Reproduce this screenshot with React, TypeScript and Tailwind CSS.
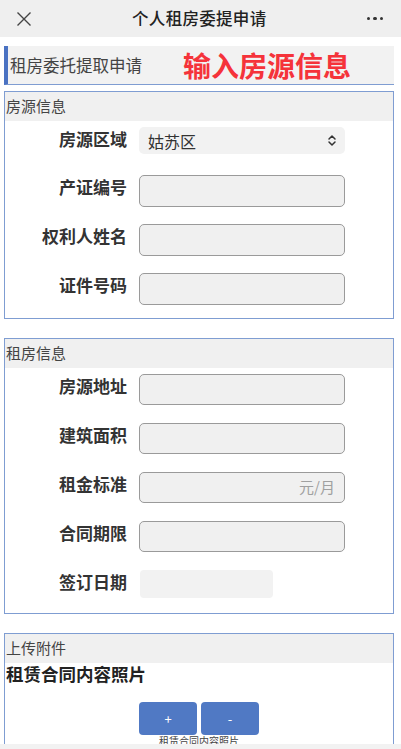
import { ReactNode } from 'react';

const font = { fontFamily: '"Noto Sans CJK SC", "Noto Sans", sans-serif' };

function Row(props: { label: string; children: ReactNode; className?: string }) {
	return (
		<div className={`flex items-start ${props.className ?? ''}`}>
			<div className="w-[122px] text-right text-[17px] leading-[24px] font-bold text-[#333]">{props.label}</div>
			<div className="ml-[12px]">{props.children}</div>
		</div>
	);
}

function TextBox(props: { suffix?: string; h?: string }) {
	return (
		<div className={`w-[206px] ${props.h ?? 'h-[32px]'} rounded-[5px] border border-[#9a9a9a] bg-[#f0f0f0] flex items-center justify-end pr-[9px]`}>
			{props.suffix ? <span className="text-[15px] text-[#a0a0a0]">{props.suffix}</span> : null}
		</div>
	);
}

function Section(props: { title: string; children: ReactNode; className?: string }) {
	return (
		<div className={`border border-[#7f9dd2] ${props.className ?? ''}`}>
			<div className="h-[29px] bg-[#f0f0f0] flex items-center pl-[1px] text-[15px] text-[#444]">{props.title}</div>
			{props.children}
		</div>
	);
}

function App() {
	return (
		<div style={font} className="w-[401px] min-h-[749px] bg-white relative overflow-hidden">
			{/* top bar */}
			<div className="h-[37px] bg-[#efefef] flex items-center justify-between px-[15px]">
				<svg width="16" height="16" viewBox="0 0 16 16" className="ml-[1px]">
					<path d="M1.5 1.5 L14.5 14.5 M14.5 1.5 L1.5 14.5" stroke="#444" strokeWidth="1.4" fill="none" />
				</svg>
				<div className="text-[16.5px] font-medium text-[#222] tracking-[0.3px]">个人租房委提申请</div>
				<div className="flex gap-[3px] mr-[3px]">
					<span className="w-[3.5px] h-[3.5px] rounded-full bg-[#333]"></span>
					<span className="w-[3.5px] h-[3.5px] rounded-full bg-[#333]"></span>
					<span className="w-[3.5px] h-[3.5px] rounded-full bg-[#333]"></span>
				</div>
			</div>

			<div className="pl-[4px] pr-[7px]">
				{/* title strip */}
				<div className="mt-[9px] h-[39px] bg-[#f2f2f2] border-l-[4px] border-l-[#4a72c2] border-b border-b-[#7f9dd2] flex items-center">
					<span className="ml-[2px] text-[16.5px] text-[#444]">租房委托提取申请</span>
					<span className="ml-[41px] text-[28px] font-bold text-[#f5333a] leading-none">输入房源信息</span>
				</div>

				<Section title="房源信息" className="mt-[6px] pb-[13px]">
					<Row label="房源区域" className="mt-[6px]">
						<div className="w-[206px] h-[27px] rounded-[5px] bg-[#f2f2f2] flex items-center justify-between pl-[9px] pr-[8px]">
							<span className="text-[16px] text-[#333]">姑苏区</span>
							<svg width="10" height="13" viewBox="0 0 10 13">
								<path d="M2 5 L5 2 L8 5 M2 8 L5 11 L8 8" stroke="#333" strokeWidth="1.5" fill="none" strokeLinecap="round" strokeLinejoin="round" />
							</svg>
						</div>
					</Row>
					<Row label="产证编号" className="mt-[21px]"><TextBox /></Row>
					<Row label="权利人姓名" className="mt-[17px]"><TextBox /></Row>
					<Row label="证件号码" className="mt-[17px]"><TextBox /></Row>
				</Section>

				<Section title="租房信息" className="mt-[19px] pb-[15px]">
					<Row label="房源地址" className="mt-[6px]"><TextBox h="h-[31px]" /></Row>
					<Row label="建筑面积" className="mt-[18px]"><TextBox h="h-[31px]" /></Row>
					<Row label="租金标准" className="mt-[18px]"><TextBox h="h-[31px]" suffix="元/月" /></Row>
					<Row label="合同期限" className="mt-[18px]"><TextBox h="h-[31px]" /></Row>
					<Row label="签订日期" className="mt-[18px]">
						<div className="ml-[1px] w-[133px] h-[28px] rounded-[4px] bg-[#f2f2f2]"></div>
					</Row>
				</Section>

				<Section title="上传附件" className="mt-[19px]">
					<div className="pl-[1px] mt-[-1px] text-[17.5px] leading-[24px] font-bold text-[#222]">租赁合同内容照片</div>
					<div className="flex justify-center gap-[4px] mt-[16px]">
						<button className="w-[58px] h-[33px] rounded-[4px] bg-[#5079c4] text-white text-[13px]">+</button>
						<button className="w-[58px] h-[33px] rounded-[4px] bg-[#5079c4] text-white text-[13px]">-</button>
					</div>
					<div className="text-center text-[10px] leading-[12px] text-[#444]">租赁合同内容照片</div>
					<div className="h-[20px]"></div>
				</Section>
			</div>

			{/* bottom bar peeking in */}
			<div className="absolute left-0 right-0 top-[744px] h-[5px] bg-[#f2f2f2]"></div>
		</div>
	);
}

export default App;
